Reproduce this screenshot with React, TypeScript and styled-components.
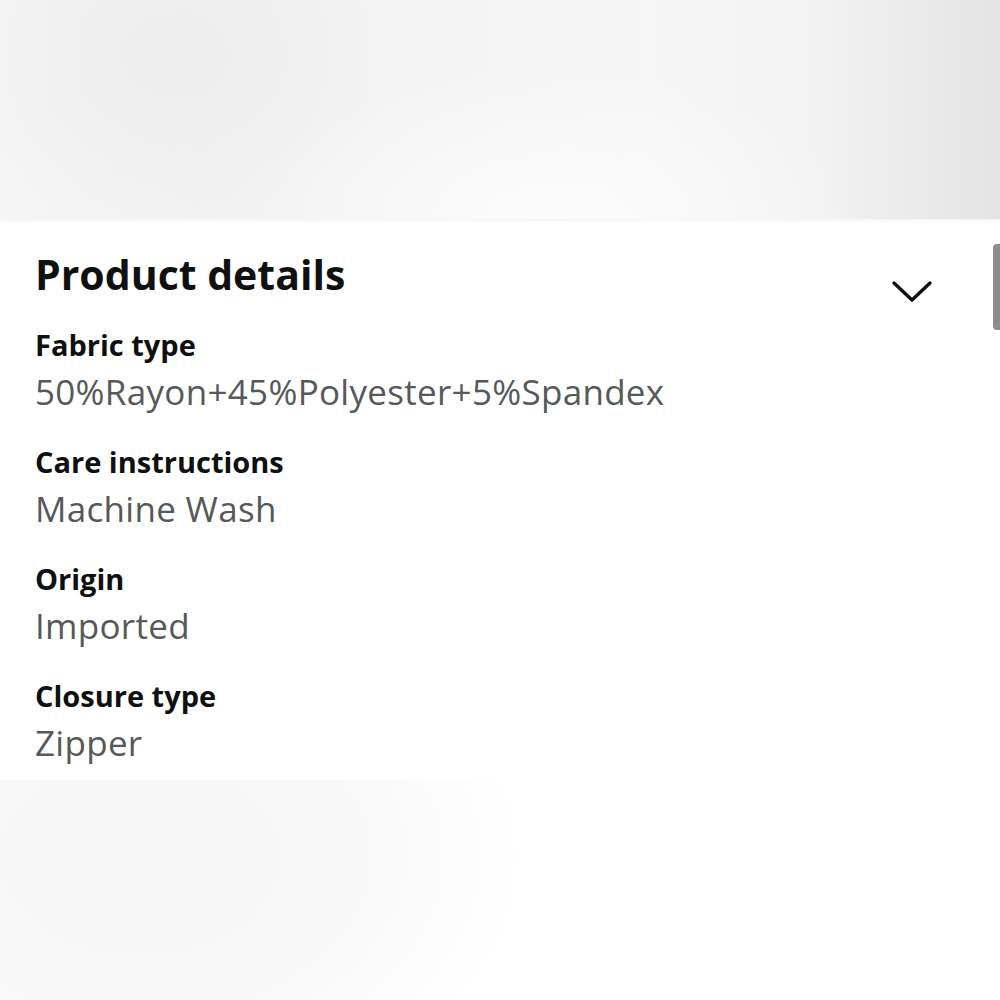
import React from "react";
import styled, { createGlobalStyle } from "styled-components";

const GlobalStyle = createGlobalStyle`
  html, body { margin: 0; padding: 0; background: #ffffff; }
  body { font-family: "Open Sans", "Noto Sans", Arial, sans-serif; }
  * { box-sizing: border-box; }
`;

const Page = styled.div`
  width: 1000px;
  height: 1000px;
  display: flex;
  flex-direction: column;
  overflow: hidden;
  background: #ffffff;
`;

const TopBand = styled.div`
  height: 219px;
  flex: none;
  background:
    linear-gradient(to right, rgba(230, 230, 230, 0) 82%, rgba(228, 228, 228, 1) 100%),
    radial-gradient(ellipse 30% 70% at 55% 100%, rgba(252, 252, 252, 1) 0%, rgba(252, 252, 252, 0) 100%),
    radial-gradient(ellipse 22% 80% at 17% 25%, rgba(237, 237, 237, 1) 0%, rgba(237, 237, 237, 0) 100%),
    linear-gradient(to right, #f5f5f5 0%, #f2f2f2 20%, #f4f4f4 45%, #f6f6f6 65%, #f2f2f2 85%);
  box-shadow: 0 2px 3px rgba(0, 0, 0, 0.045);
  position: relative;
  z-index: 1;
`;

const Panel = styled.section`
  position: relative;
  background: #ffffff;
  padding: 31px 67px 15px 35px;
  flex: none;
`;

const Header = styled.div`
  height: 48px;
  display: flex;
  justify-content: space-between;
  align-items: flex-start;
  margin-bottom: 30px;
`;

const Title = styled.h2`
  margin: 0;
  font-size: 41px;
  line-height: 48px;
  font-weight: 700;
  color: #0f1111;
`;

const Chevron = styled.svg`
  margin-top: 29px;
  width: 42px;
  height: 24px;
  flex: none;
`;

const List = styled.dl`
  margin: 0;
  display: flex;
  flex-direction: column;
  gap: 31px;
`;

const Row = styled.div`
  display: flex;
  flex-direction: column;
`;

const Label = styled.dt`
  font-size: 29px;
  line-height: 34px;
  font-weight: 700;
  color: #0f1111;
  white-space: nowrap;
`;

const Value = styled.dd`
  margin: 8px 0 0 0;
  font-size: 35px;
  line-height: 44px;
  letter-spacing: 0.3px;
  font-weight: 400;
  color: #565959;
  white-space: nowrap;
`;

const ScrollThumb = styled.div`
  position: absolute;
  right: 0;
  top: 25px;
  width: 7px;
  height: 86px;
  border-radius: 4px 0 0 4px;
  background: #8c8c8c;
`;

const BottomBand = styled.div`
  flex: 1;
  background: radial-gradient(ellipse 38% 120% at 14% 35%, #f6f6f6 0%, #f8f8f8 55%, #ffffff 100%);
`;

const details = [
  { label: "Fabric type", value: "50%Rayon+45%Polyester+5%Spandex" },
  { label: "Care instructions", value: "Machine Wash" },
  { label: "Origin", value: "Imported" },
  { label: "Closure type", value: "Zipper" },
];

export default function App() {
  return (
    <>
      <GlobalStyle />
      <Page>
        <TopBand />
        <Panel>
          <Header>
            <Title>Product details</Title>
            <Chevron viewBox="0 0 42 24" fill="none">
              <polyline
                points="3,4 21,21 39,4"
                stroke="#0f1111"
                strokeWidth="3.4"
                strokeLinecap="round"
                strokeLinejoin="round"
              />
            </Chevron>
          </Header>
          <List>
            {details.map((d) => (
              <Row key={d.label}>
                <Label>{d.label}</Label>
                <Value>{d.value}</Value>
              </Row>
            ))}
          </List>
          <ScrollThumb />
        </Panel>
        <BottomBand />
      </Page>
    </>
  );
}
